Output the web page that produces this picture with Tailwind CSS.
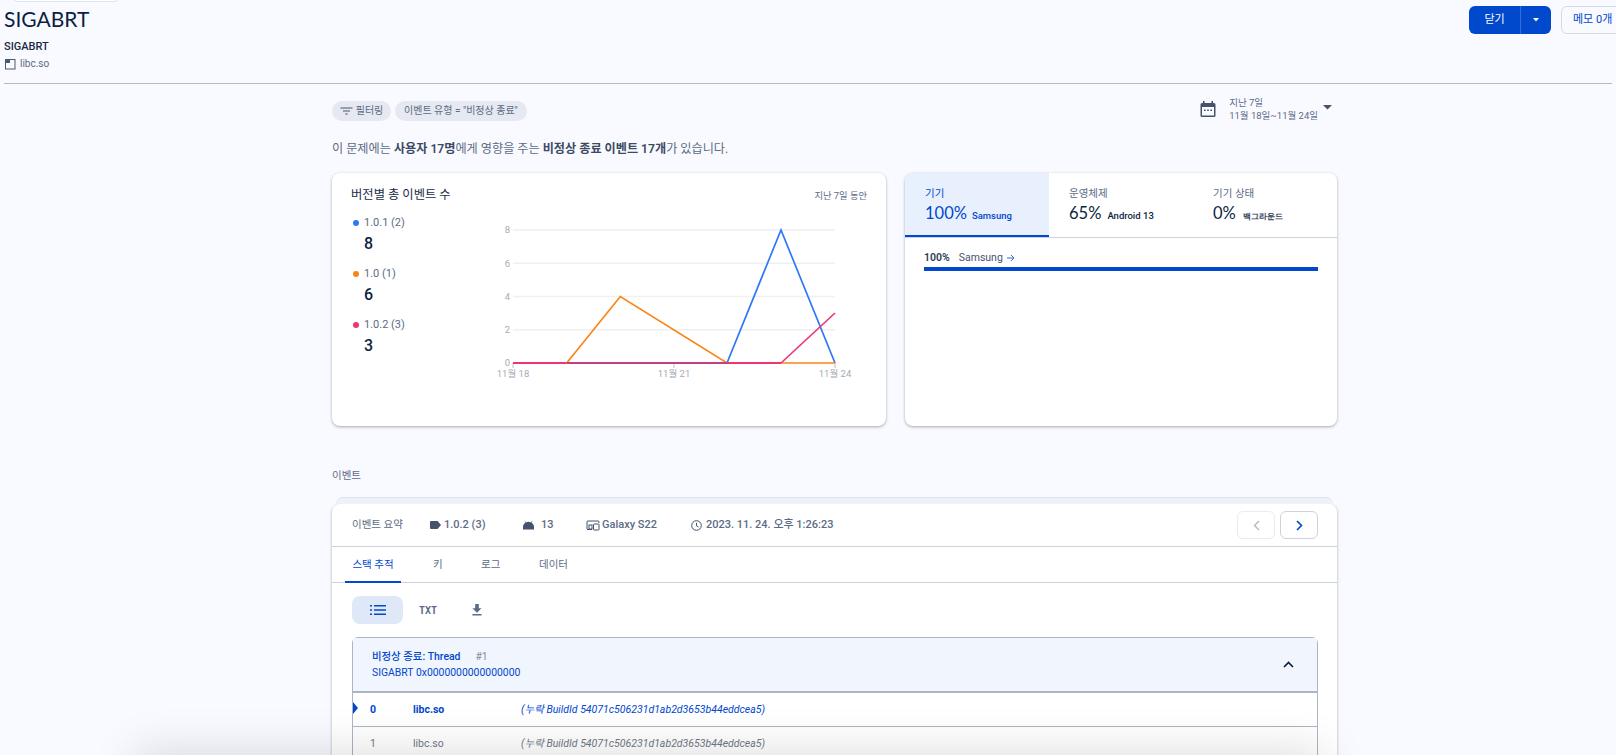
<!DOCTYPE html>
<html lang="ko">
<head>
<meta charset="UTF-8">
<title>SIGABRT</title>
<script src="https://cdn.jsdelivr.net/npm/@tailwindcss/browser@4"></script>
</head>
<body class="relative h-[755px] w-[1616px] overflow-hidden bg-[#f9faff] font-['Roboto','Noto_Sans_CJK_KR',sans-serif] text-[#5c6b85]">

<!-- clipped chip at the very top -->
<div class="absolute left-[12px] top-[-20px] h-[22px] w-[108px] rounded-md border border-[#dfe3ec] bg-white"></div>

<!-- header -->
<header class="mx-[4px] flex h-[84px] items-start justify-between border-b border-[#b4b9c4]">
  <div>
    <h1 class="mt-[4px] font-['Lato','Noto_Sans_CJK_KR',sans-serif] text-[21px] leading-[30px] text-[#0d1f3f]">SIGABRT</h1>
    <div class="mt-[5px] text-[11px] font-medium leading-[16px] text-[#1a2a45]">SIGABRT</div>
    <div class="mt-[1px] flex items-center gap-[4px] text-[10px] leading-[16px]">
      <svg width="12" height="12" viewBox="0 0 12 12" fill="none"><rect x="1.500" y="1.500" width="9.500" height="9.500" stroke="#4a5872"/><rect x="2" y="2" width="4" height="3" fill="#4a5872"/></svg>
      libc.so
    </div>
  </div>
  <div class="mr-[-19px] mt-[6px] flex shrink-0 gap-[10px]">
    <div class="flex h-[28px] w-[82px] items-center rounded-md bg-[#0048cc] text-[11px] text-white">
      <span class="w-[51px] text-center">닫기</span>
      <span class="flex h-full flex-1 items-center justify-center border-l border-white/20">
        <svg width="8" height="4" viewBox="0 0 8 4"><path d="M1 0h6L4 3.500z" fill="#fff"/></svg>
      </span>
    </div>
    <div class="flex h-[28px] w-[70px] items-center rounded-md border border-[#d3d9e6] pl-[11px] text-[11px] whitespace-nowrap text-[#0048cc]">메모 0개</div>
  </div>
</header>

<main class="ml-[332px] w-[1005px]">
  <!-- filter row -->
  <div class="flex h-[50px] items-center justify-between">
    <div class="mt-[3px] flex gap-[4px]">
      <div class="flex h-[20px] w-[59px] items-center justify-center gap-[3px] rounded-full bg-[#e6e9f1] text-[10px]">
        <svg width="13" height="8" viewBox="0 0 12 8"><path d="M0 .5h12v1H0zM2.500 3.500h7v1h-7zM4.800 6.500h2.400v1H4.800z" fill="#44526c"/></svg>
        필터링
      </div>
      <div class="flex h-[20px] items-center rounded-full bg-[#e6e9f1] px-[9px] text-[10px]">이벤트 유형 = "비정상 종료"</div>
    </div>
    <div class="mr-[5px] flex items-center">
      <svg width="18" height="18" viewBox="0 0 18 18" class="mr-[12px]"><path d="M4 1h1.600v2h6.800V1H14v2h1a1.500 1.500 0 0 1 1.500 1.500v11A1.500 1.500 0 0 1 15 17H3a1.500 1.500 0 0 1-1.500-1.500v-11A1.500 1.500 0 0 1 3 3h1zM3 7v8.500h12V7zM5 9.500h1.600V11H5zM8.200 9.500h1.600V11H8.200zM11.400 9.500H13V11h-1.600z" fill="#44526c"/></svg>
      <div class="text-[9.5px] leading-[13px]">
        <div>지난 7일</div>
        <div class="whitespace-nowrap">11월 18일~11월 24일</div>
      </div>
      <svg width="9" height="5" viewBox="0 0 9 5" class="mb-[3px] ml-[5px]"><path d="M0 0h9L4.500 4.500z" fill="#44526c"/></svg>
    </div>
  </div>

  <p class="mt-[6px] text-[12.15px] leading-[18px]">이 문제에는 <b class="font-semibold text-[#3d4a63]">사용자 17명</b>에게 영향을 주는 <b class="font-semibold text-[#3d4a63]">비정상 종료 이벤트 17개</b>가 있습니다.</p>

  <!-- cards -->
  <div class="mt-[15px] flex h-[253px] gap-[19px]">
    <section class="relative w-[554px] rounded-lg bg-white shadow-[0_1px_3px_rgba(60,70,90,.45)]">
      <div class="flex items-start justify-between px-[19px] pt-[14px]">
        <h2 class="text-[12.3px] leading-[16px] text-[#1d2b47]">버전별 총 이벤트 수</h2>
        <span class="mt-[3px] text-[9.3px] leading-[12px]">지난 7일 동안</span>
      </div>
      <div class="flex">
        <ul class="w-[158px] pl-[21px] pt-[12px]">
          <li class="h-[51px]">
            <div class="flex items-center gap-[5px] text-[11px] leading-[16px]"><span class="size-[6px] rounded-full bg-[#2f78f5]"></span>1.0.1 (2)</div>
            <div class="ml-[11px] mt-[3px] text-[16px] font-medium leading-[20px] text-[#0d1f3f]">8</div>
          </li>
          <li class="h-[51px]">
            <div class="flex items-center gap-[5px] text-[11px] leading-[16px]"><span class="size-[6px] rounded-full bg-[#fb8417]"></span>1.0 (1)</div>
            <div class="ml-[11px] mt-[3px] text-[16px] font-medium leading-[20px] text-[#0d1f3f]">6</div>
          </li>
          <li>
            <div class="flex items-center gap-[5px] text-[11px] leading-[16px]"><span class="size-[6px] rounded-full bg-[#f1356f]"></span>1.0.2 (3)</div>
            <div class="ml-[11px] mt-[3px] text-[16px] font-medium leading-[20px] text-[#0d1f3f]">3</div>
          </li>
        </ul>
        <svg width="390" height="185" viewBox="490 205 390 185" class="mt-[2px] font-['Roboto','Noto_Sans_CJK_KR',sans-serif]">
          <g stroke="#eef0f3" stroke-width="1.500">
            <path d="M513 230H835M513 263.250H835M513 296.500H835M513 329.750H835"/>
          </g>
          <g fill="#a6abb3" font-size="9.500" text-anchor="end">
            <text x="510" y="233">8</text><text x="510" y="266.500">6</text><text x="510" y="300">4</text><text x="510" y="333">2</text><text x="510" y="366">0</text>
          </g>
          <path d="M513 363v5M674 363v5M835 363v5" stroke="#b9bdc4"/>
          <g fill="#a6abb3" font-size="9.500" text-anchor="middle">
            <text x="513" y="377">11월 18</text><text x="674" y="377">11월 21</text><text x="835" y="377">11월 24</text>
          </g>
          <path d="M727 363L781 230L835 363" fill="none" stroke="#2f78f5" stroke-width="1.700"/>
          <path d="M566.700 363L620.300 296.500L727 363H835" fill="none" stroke="#fb8417" stroke-width="1.700"/>
          <path d="M781 363L835 313" fill="none" stroke="#f1356f" stroke-width="1.700"/>
          <path d="M513 363H566.700M727 363H781" stroke="#f1356f" stroke-width="2"/>
          <path d="M566.700 363H727" stroke="#c33e8a" stroke-width="2"/>
        </svg>
      </div>
    </section>

    <section class="w-[432px] overflow-hidden rounded-lg bg-white shadow-[0_1px_3px_rgba(60,70,90,.45)]">
      <div class="flex h-[65px] border-b border-[#cdd2dd]">
        <div class="w-[144px] border-b-2 border-[#0048cc] bg-[#e8f0fd] pl-[20px] pt-[14px] text-[#0048cc]">
          <div class="text-[10.5px] leading-[14px]">기기</div>
          <div class="mt-[1px] flex items-baseline gap-[5px] font-['Lato',sans-serif] text-[16.5px] leading-[22px]">100%<span class="font-['Roboto',sans-serif] text-[9.5px] font-medium">Samsung</span></div>
        </div>
        <div class="w-[144px] pl-[20px] pt-[14px]">
          <div class="text-[10.5px] leading-[14px]">운영체제</div>
          <div class="mt-[1px] flex items-baseline gap-[6px] font-['Lato',sans-serif] text-[16.5px] leading-[22px] text-[#0d1f3f]">65%<span class="font-['Roboto',sans-serif] text-[9.500px] font-medium">Android 13</span></div>
        </div>
        <div class="flex-1 pl-[20px] pt-[14px]">
          <div class="text-[10.5px] leading-[14px]">기기 상태</div>
          <div class="mt-[1px] flex items-baseline gap-[7px] font-['Lato',sans-serif] text-[16.5px] leading-[22px] text-[#0d1f3f]">0%<span class="font-['Roboto',sans-serif] text-[8px] font-bold text-[#2e3b55]">백그라운드</span></div>
        </div>
      </div>
      <div class="px-[19px] pt-[12px]">
        <div class="flex items-center text-[10.5px] leading-[16px] text-[#46546e]">
          <b class="mr-[9px] font-semibold text-[#2e3b55]">100%</b>Samsung
          <svg width="8" height="8" viewBox="0 0 8 8" class="ml-[4px]"><path d="M0 4h7M4 1l3 3-3 3" fill="none" stroke="#2f6ae0"/></svg>
        </div>
        <div class="mt-[1px] h-[4px] bg-[#0048cc]"></div>
      </div>
    </section>
  </div>

  <h3 class="mt-[42px] text-[10.5px] leading-[16px]">이벤트</h3>

  <!-- events card -->
  <section class="relative mt-[20px] h-[300px] rounded-t-lg bg-white shadow-[0_1px_3px_rgba(60,70,90,.45)]">
    <div class="absolute inset-x-[4px] top-[-7px] h-[7px] rounded-t-lg border-t border-[#dfe2ea] bg-[#eef1f8]"></div>
    <div class="flex h-[43px] items-center border-b border-[#cdd2dd] text-[11px] font-medium">
      <span class="ml-[20px] w-[78px] text-[10.5px] font-normal">이벤트 요약</span>
      <svg width="11" height="8" viewBox="0 0 11 8"><path d="M1 0h6.500L11 4 7.500 8H1a1 1 0 0 1-1-1V1a1 1 0 0 1 1-1z" fill="#44526c"/></svg>
      <span class="ml-[3px] w-[79px]">1.0.2 (3)</span>
      <svg width="11" height="9" viewBox="0 0 11 9"><path d="M0 8.500h11V6c0-2-1-3.400-2.400-4.200L9.400.4 9 .1 8.100 1.500a5.600 5.600 0 0 0-5.200 0L2 .1l-.4.300.8 1.400C1 2.600 0 4 0 6z" fill="#44526c"/></svg>
      <span class="ml-[7px] w-[45px]">13</span>
      <svg width="14" height="11" viewBox="0 0 14 11" fill="none"><path d="M1 9V2a1 1 0 0 1 1-1h10a1 1 0 0 1 1 1v1M1 9.500h5" stroke="#44526c"/><rect x="7.500" y="4" width="5.500" height="6" rx=".6" stroke="#44526c"/><rect x="3" y="5" width="3" height="4" stroke="#44526c"/></svg>
      <span class="ml-[2px] w-[89px]">Galaxy S22</span>
      <svg width="11" height="11" viewBox="0 0 11 11" fill="none"><circle cx="5.500" cy="5.500" r="4.800" stroke="#44526c"/><path d="M5.500 2.800v3l2 1.200" stroke="#44526c"/></svg>
      <span class="ml-[4px]">2023. 11. 24. 오후 1:26:23</span>
      <div class="ml-auto mr-[19px] flex gap-[5px]">
        <span class="flex h-[28px] w-[38px] items-center justify-center rounded-md border border-[#e8ebf1]">
          <svg width="7" height="11" viewBox="0 0 7 11"><path d="M6 1L1.500 5.500 6 10" fill="none" stroke="#b6bcc9" stroke-width="1.500"/></svg>
        </span>
        <span class="flex h-[28px] w-[38px] items-center justify-center rounded-md border border-[#cdd2dd]">
          <svg width="7" height="11" viewBox="0 0 7 11"><path d="M1 1l4.500 4.500L1 10" fill="none" stroke="#0048cc" stroke-width="1.600"/></svg>
        </span>
      </div>
    </div>

    <nav class="flex h-[36px] items-center border-b border-[#cdd2dd] text-[10.5px]">
      <span class="relative ml-[13px] flex h-full w-[56px] items-center justify-center text-[#0048cc]">스택 추적<i class="absolute inset-x-0 bottom-[-1px] h-[2px] bg-[#0048cc]"></i></span>
      <span class="ml-[32px] w-[48px]">키</span>
      <span class="w-[58px]">로그</span>
      <span>데이터</span>
    </nav>

    <div class="flex items-center pl-[20px] pt-[13px]">
      <span class="flex h-[28px] w-[51px] items-center justify-center rounded-lg bg-[#dfe8f7]">
        <svg width="16" height="12" viewBox="0 0 16 12"><path d="M0 1h2v1.500H0zM4 1h12v1.500H4zM0 5.250h2v1.500H0zM4 5.250h12v1.500H4zM0 9.500h2V11H0zM4 9.500h12V11H4z" fill="#0048cc"/></svg>
      </span>
      <span class="ml-[16px] w-[53px] font-['DejaVu_Sans_Mono',monospace] text-[10px] font-bold">TXT</span>
      <svg width="10" height="12" viewBox="0 0 11 13"><path d="M3.500 0h4v4.500H10.500L5.500 9.500.5 4.500h3zM.5 11h10v1.500H.5z" fill="#5c6b85"/></svg>
    </div>

    <!-- thread -->
    <div class="ml-[20px] mr-[19px] mt-[13px] rounded-t-md border-x border-t border-[#adb4c2]">
      <div class="flex h-[55px] items-center justify-between border-b-2 border-[#adb4c2] bg-[#f1f5fe] pl-[19px] pr-[23px] text-[#0048cc]">
        <div class="text-[10.4px] leading-[16px]">
          <div><b class="font-medium">비정상 종료: Thread</b><span class="ml-[15px] text-[#858d9c]">#1</span></div>
          <div class="whitespace-nowrap">SIGABRT 0x0000000000000000</div>
        </div>
        <svg width="11" height="7" viewBox="0 0 11 7"><path d="M1 6l4.500-4.500L10 6" fill="none" stroke="#0d1f3f" stroke-width="1.700"/></svg>
      </div>
      <div class="relative flex h-[34px] items-center border-b border-[#adb4c2] text-[10.5px] text-[#0048cc]">
        <svg width="5" height="12" viewBox="0 0 5 12" class="absolute left-0 top-[9px]"><path d="M0 0l5 6-5 6z" fill="#0048cc"/></svg>
        <b class="ml-[17px] w-[43px] font-bold">0</b>
        <b class="w-[108px] font-bold">libc.so</b>
        <i>(누락 BuildId 54071c506231d1ab2d3653b44eddcea5)</i>
      </div>
      <div class="flex h-[33px] items-center text-[10.5px] text-[#6f7888]">
        <span class="ml-[17px] w-[43px]">1</span>
        <span class="w-[108px]">libc.so</span>
        <i>(누락 BuildId 54071c506231d1ab2d3653b44eddcea5)</i>
      </div>
    </div>
  </section>
</main>

<!-- shadow of a bar floating just under the fold -->
<div class="absolute bottom-[-40px] left-[140px] h-[40px] w-[1180px] shadow-[0_0_45px_5px_rgba(0,0,0,.13)]"></div>
</body>
</html>
